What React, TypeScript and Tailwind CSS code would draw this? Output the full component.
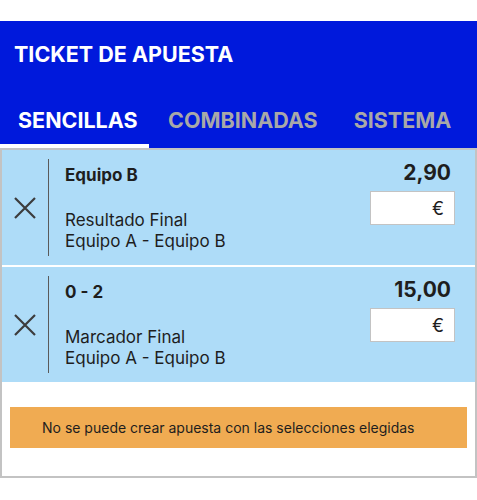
type Selection = {
  pick: string;
  market: string;
  event: string;
  odds: string;
};

const SELECTIONS: Selection[] = [
  { pick: "Equipo B", market: "Resultado Final", event: "Equipo A - Equipo B", odds: "2,90" },
  { pick: "0 - 2", market: "Marcador Final", event: "Equipo A - Equipo B", odds: "15,00" },
];

const TABS = ["SENCILLAS", "COMBINADAS", "SISTEMA"];

function CloseIcon() {
  return (
    <svg viewBox="0 0 22 22" className="h-[22px] w-[22px]" aria-hidden>
      <path d="M1 1L21 21M21 1L1 21" stroke="currentColor" strokeWidth={2.2} fill="none" />
    </svg>
  );
}

function SelectionRow({ s }: { s: Selection }) {
  return (
    <div className="flex h-[115px] bg-[#aedcf8]">
      <button type="button" className="flex w-[46px] shrink-0 items-center justify-center text-[#3c3c3c]">
        <CloseIcon />
      </button>
      <div className="my-[9px] w-px bg-[#5a5a5a]" />
      <div className="flex-1 pl-[16px] pt-[15px] text-[#1e1e1e]">
        <p className="text-[17px] font-bold leading-[20px]">{s.pick}</p>
        <p className="mt-[25px] text-[17px] leading-[21px]">{s.market}</p>
        <p className="text-[17px] leading-[21px]">{s.event}</p>
      </div>
      <div className="flex w-[105px] shrink-0 flex-col items-end pr-[20px] pt-[11px]">
        <p className="pr-[4px] text-[21px] font-bold leading-[24px] text-[#1e1e1e]">{s.odds}</p>
        <div className="mt-[6px] flex h-[34px] w-[85px] items-center justify-end border border-[#c3c3c3] bg-white pr-[10px] text-[18px] text-[#1e1e1e]">
          €
        </div>
      </div>
    </div>
  );
}

export default function App() {
  return (
    <div className="w-[477px] bg-white pt-[21px] font-['Inter',sans-serif]">
      <header className="bg-[#0019dc]">
        <div className="flex h-[66px] items-center px-[14px]">
          <h1 className="text-[21.5px] font-bold text-white">TICKET DE APUESTA</h1>
        </div>
        <div className="flex h-[61px] items-end" role="tablist">
          {TABS.map((t, i) => (
            <button
              key={t}
              type="button"
              role="tab"
              aria-selected={i === 0}
              className={`flex flex-col ${i === 0 ? "w-[149px] pl-[18px]" : "pl-[19px] pr-[17px]"}`}
            >
              <span
                className={`text-left text-[21.5px] font-bold leading-[24px] ${
                  i === 0 ? "text-white" : "text-[#a8a8a8]"
                }`}
              >
                {t}
              </span>
              <span className={`mt-[12px] h-[4px] ${i === 0 ? "-ml-[18px] bg-white" : "bg-transparent"}`} />
            </button>
          ))}
        </div>
      </header>

      <div className="border-2 border-[#c3c3c3]">
        <div className="flex flex-col gap-[2px]">
          {SELECTIONS.map((s) => (
            <SelectionRow key={s.pick} s={s} />
          ))}
        </div>
        <div className="px-[8px] pb-[28px] pt-[25px]">
          <div className="flex h-[41px] items-center bg-[#f0ab52] pl-[32px] text-[14px] text-[#1e1e1e]">
            No se puede crear apuesta con las selecciones elegidas
          </div>
        </div>
      </div>
    </div>
  );
}
